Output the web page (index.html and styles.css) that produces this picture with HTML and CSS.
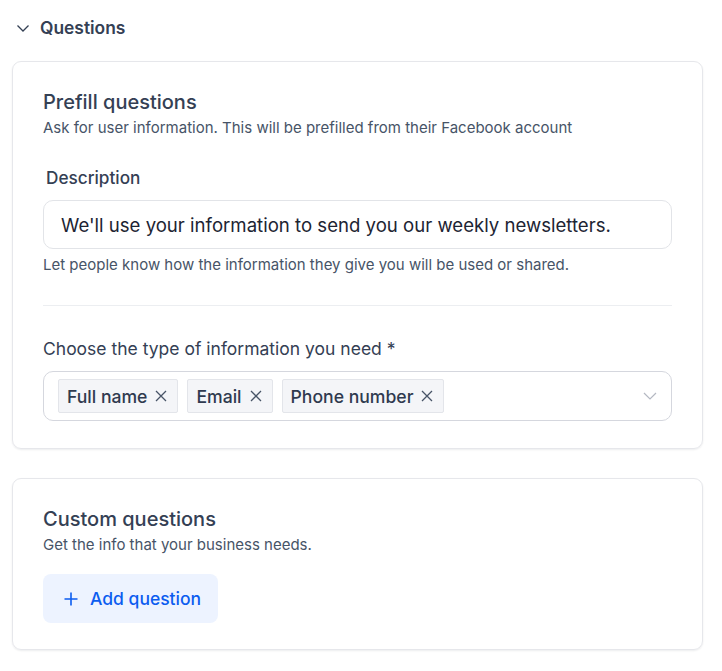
FILE: index.html
```html
<!DOCTYPE html>
<html lang="en">
<head>
    <meta charset="UTF-8">
    <title>Questions</title>
    <link rel="stylesheet" href="styles.css">
</head>
<body>
    <div class="section-head">
        <svg class="caret" width="14" height="14" viewBox="0 0 14 14"><path d="M1.5 4.5 L7 10 L12.5 4.5" fill="none" stroke="#344054" stroke-width="1.3"/></svg>
        <span>Questions</span>
    </div>

    <div class="card">
        <h2>Prefill questions</h2>
        <p class="sub">Ask for user information. This will be prefilled from their Facebook account</p>

        <label class="field-label">Description</label>
        <div class="text-input">We'll use your information to send you our weekly newsletters.</div>
        <p class="help">Let people know how the information they give you will be used or shared.</p>

        <hr class="divider">

        <label class="choose-label">Choose the type of information you need *</label>
        <div class="multi-select">
            <span class="tag">Full name <svg width="12" height="12" viewBox="0 0 12 12"><path d="M1 1 L11 11 M11 1 L1 11" stroke="#475467" stroke-width="1.3"/></svg></span>
            <span class="tag">Email <svg width="12" height="12" viewBox="0 0 12 12"><path d="M1 1 L11 11 M11 1 L1 11" stroke="#475467" stroke-width="1.3"/></svg></span>
            <span class="tag">Phone number <svg width="12" height="12" viewBox="0 0 12 12"><path d="M1 1 L11 11 M11 1 L1 11" stroke="#475467" stroke-width="1.3"/></svg></span>
            <svg class="select-caret" width="14" height="8" viewBox="0 0 14 8"><path d="M1 1 L7 7 L13 1" fill="none" stroke="#b4b8c2" stroke-width="1.2"/></svg>
        </div>
    </div>

    <div class="card card-custom">
        <h2>Custom questions</h2>
        <p class="sub">Get the info that your business needs.</p>
        <button class="add-btn"><svg width="14" height="14" viewBox="0 0 14 14"><path d="M7 0.5 V13.5 M0.5 7 H13.5" stroke="#0b5cf0" stroke-width="1.6"/></svg> Add question</button>
    </div>
</body>
</html>
```

FILE: styles.css
```css
body {
    font-family: Inter, "Noto Sans", sans-serif;
    margin: 0;
    padding: 14px 19px 20px 12px;
    background: #fff;
    color: #344054;
}
.section-head {
    display: flex;
    align-items: center;
    gap: 10px;
    padding-left: 4px;
    font-size: 17.4px;
    font-weight: 600;
    height: 26px;
    margin-bottom: 21px;
}
.caret {
    margin-top: 1px;
}
.card {
    border: 1px solid #e6e7eb;
    border-radius: 9px;
    box-shadow: 0 1px 2px rgba(16, 24, 40, 0.08);
    padding: 27px 30px 27px 30px;
    margin-bottom: 29px;
}
.card h2 {
    margin: 0;
    font-size: 20px;
    font-weight: 500;
    color: #344054;
    line-height: 26px;
}
.sub {
    margin: 3px 0 0;
    font-size: 15px;
    color: #475467;
    line-height: 20px;
}
.field-label {
    display: block;
    margin: 29px 0 0 3px;
    font-size: 17.2px;
    font-weight: 500;
    line-height: 22px;
}
.text-input {
    box-sizing: border-box;
    margin-top: 11px;
    height: 49px;
    border: 1px solid #e2e4e8;
    border-radius: 10px;
    padding: 0 17px;
    display: flex;
    align-items: center;
    font-size: 18.6px;
    color: #1d2433;
}
.help {
    margin: 6px 0 0;
    font-size: 15px;
    color: #475467;
    line-height: 20px;
}
.divider {
    border: none;
    border-top: 1px solid #eceef1;
    margin: 30px 0 0;
}
.choose-label {
    display: block;
    margin-top: 32px;
    font-size: 17.5px;
    line-height: 22px;
}
.multi-select {
    box-sizing: border-box;
    margin-top: 11px;
    height: 50px;
    border: 1px solid #d5d7de;
    border-radius: 10px;
    padding: 0 14px;
    display: flex;
    align-items: center;
    gap: 9px;
}
.tag {
    display: inline-flex;
    align-items: center;
    gap: 8px;
    box-sizing: border-box;
    height: 34px;
    padding: 0 10px 0 8px;
    background: #f4f5f8;
    border: 1px solid #e3e5ea;
    border-radius: 2px;
    font-size: 17.6px;
    font-weight: 500;
    color: #2f3a4f;
}
.select-caret {
    margin-left: auto;
}
.card-custom {
    padding-top: 27px;
    padding-bottom: 26px;
}
.add-btn {
    margin-top: 19px;
    height: 49px;
    padding: 0 17px 0 21px;
    background: #edf3ff;
    border: none;
    border-radius: 8px;
    font-family: inherit;
    font-size: 17.5px;
    font-weight: 500;
    color: #0b5cf0;
    display: flex;
    align-items: center;
    gap: 12px;
}
```
